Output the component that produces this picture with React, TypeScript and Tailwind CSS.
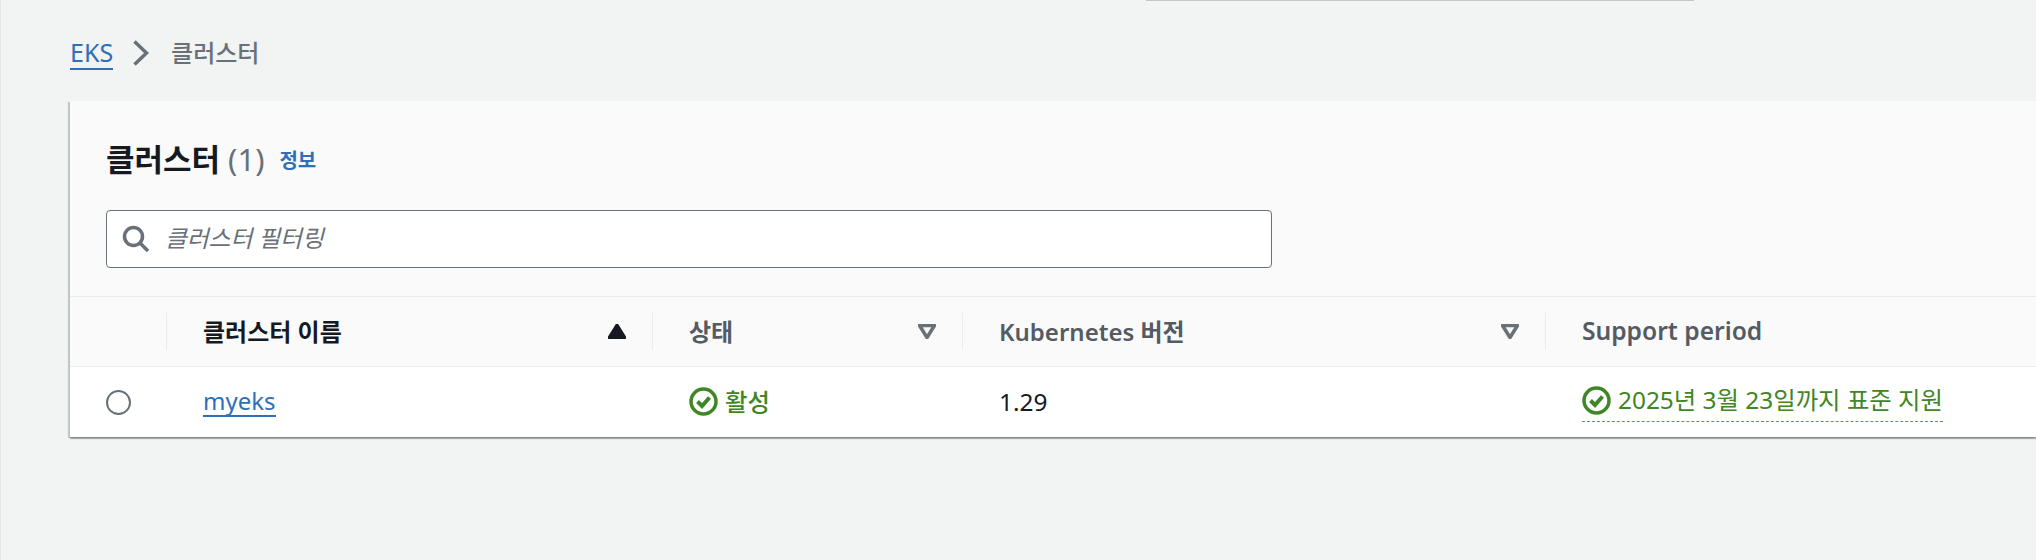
const FONT = '[font-family:"Noto_Sans","Noto_Sans_CJK_KR",sans-serif]'

function CheckIcon() {
  return (
    <svg width="29" height="29" viewBox="0 0 29 29" fill="none" className="shrink-0">
      <circle cx="14.5" cy="14.5" r="12.5" stroke="#3f8624" strokeWidth="3.5" />
      <path d="M8.5 14.5l4.5 4.5 7.5-8.5" stroke="#3f8624" strokeWidth="4" />
    </svg>
  )
}

function SearchIcon() {
  return (
    <svg width="28" height="28" viewBox="0 0 28 28" fill="none" className="shrink-0">
      <circle cx="11.5" cy="11.5" r="9" stroke="#687078" strokeWidth="3.5" />
      <path d="M18 18l8 8" stroke="#687078" strokeWidth="3.5" />
    </svg>
  )
}

function SortMark({ filled }: { filled?: boolean }) {
  return (
    <svg width="18" height="15" viewBox="0 0 18 15" className="shrink-0">
      <path
        d="M9 1.5L16.5 13.5H1.5Z"
        transform={filled ? undefined : 'rotate(180 9 7.5)'}
        fill={filled ? '#16191f' : 'none'}
        stroke={filled ? '#16191f' : '#687078'}
        strokeWidth="3.5"
        strokeLinejoin="round"
      />
    </svg>
  )
}

function HeaderCell({ label, width, sort, active, size = 'text-[24px]' }: { label: string; width: string; sort?: 'up' | 'down'; active?: boolean; size?: string }) {
  return (
    <div className={`flex h-[37px] items-center justify-between border-l border-[#eaeded] pl-[36px] pr-[26px] ${width}`}>
      <span className={`font-semibold ${size} ${active ? 'text-[#16191f]' : 'text-[#545b64]'}`}>{label}</span>
      {sort && <SortMark filled={sort === 'up'} />}
    </div>
  )
}

export default function App() {
  return (
    <div className={`relative h-[560px] overflow-hidden border-l border-[#e4e7e7] bg-[#f2f3f3] pl-[69px] ${FONT}`}>
      <div className="absolute left-[1145px] top-0 h-px w-[548px] bg-[#c4c8c8]" />

      {/* Breadcrumb */}
      <nav className="flex h-[101px] items-start pt-[37px]">
        <a className="border-b-2 border-[#2e6fb7] text-[25px] leading-[31px] text-[#2e6fb7]">EKS</a>
        <svg width="18" height="28" viewBox="0 0 18 28" fill="none" className="ml-[19px] mr-[21px] mt-[2px] shrink-0">
          <path d="M2.5 2.5L14.5 14L2.5 25.5" stroke="#687078" strokeWidth="3.5" />
        </svg>
        <span className="text-[24px] font-medium leading-[32px] text-[#687078]">클러스터</span>
      </nav>

      {/* Clusters card */}
      <div className="bg-[#fafafa] shadow-[0_2px_1px_rgba(0,28,36,0.28),2px_1px_1px_rgba(0,28,36,0.12),-2px_1px_1px_rgba(0,28,36,0.18)]">
        <div className="flex h-[109px] items-start pl-[36px] pt-[36px]">
          <h1 className="text-[31px] font-bold leading-[44px] text-[#16191f]">클러스터</h1>
          <span className="ml-[8px] text-[31px] leading-[44px] text-[#687078]">(1)</span>
          <a className="ml-[15px] mt-[8px] text-[20px] font-semibold leading-[32px] text-[#2e6fb7]">정보</a>
        </div>

        <div className="pl-[36px]">
          <div className="flex h-[58px] w-[1166px] items-center rounded-[4px] border-[1.5px] border-[#687078] bg-white pl-[15px]">
            <SearchIcon />
            <span className="ml-[15px] text-[23.7px] italic text-[#687078]">클러스터 필터링</span>
          </div>
        </div>

        <div className="mt-[28px] flex h-[71px] items-center border-y border-[#eaeded]">
          <div className="w-[96px] shrink-0" />
          <HeaderCell label="클러스터 이름" width="w-[486px]" sort="up" active />
          <HeaderCell label="상태" width="w-[310px]" sort="down" />
          <HeaderCell label="Kubernetes 버전" width="w-[583px]" sort="down" />
          <HeaderCell label="Support period" width="flex-1" size="text-[24.6px]" />
        </div>

        <div className="flex h-[70px] items-center bg-white text-[24.4px]">
          <div className="w-[96px] shrink-0 pl-[36px]">
            <div className="size-[25px] rounded-full border-2 border-[#687078] bg-white" />
          </div>
          <div className="w-[486px] pl-[37px]">
            <a className="relative -top-px inline-block border-b-2 border-[#2e6fb7] text-[24px] leading-[29px] text-[#2e6fb7]">myeks</a>
          </div>
          <div className="flex w-[310px] items-center gap-[7px] pl-[37px] text-[#3f8624]">
            <CheckIcon />
            <span className="font-medium">활성</span>
          </div>
          <div className="w-[583px] pl-[37px] text-[#16191f]">1.29</div>
          <div className="flex-1 pl-[37px]">
            <div className="relative top-[1px] inline-flex items-center gap-[7px] border-b border-dashed border-[#5f9a48] pb-[3px] text-[#3f8624]">
              <CheckIcon />
              <span>2025년 3월 23일까지 표준 지원</span>
            </div>
          </div>
        </div>
      </div>
    </div>
  )
}
